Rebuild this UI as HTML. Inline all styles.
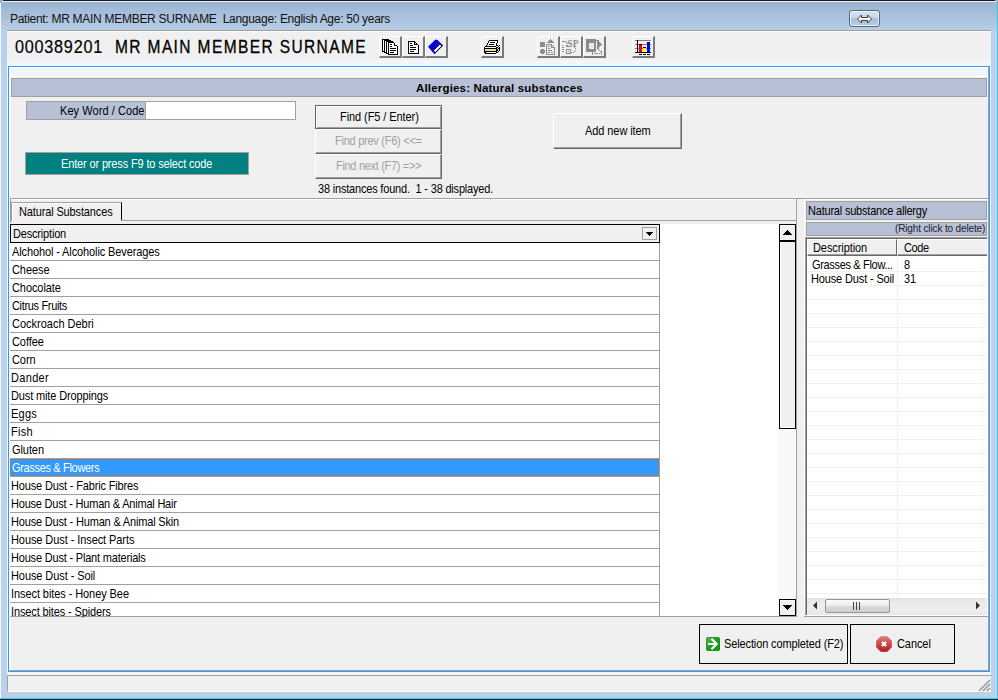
<!DOCTYPE html>
<html><head><meta charset="utf-8">
<style>
*{margin:0;padding:0;box-sizing:border-box}
html,body{width:998px;height:700px;overflow:hidden}
body{position:relative;background:#b9d1ea;font-family:"Liberation Sans",sans-serif;font-size:11px;color:#000}
.a{position:absolute}
.t{position:absolute;white-space:pre;font-size:12px;line-height:14px;transform-origin:0 0}
.btn3d{position:absolute;background:#f0f0f0;border-top:1px solid #fff;border-left:1px solid #fff;border-right:1px solid #696969;border-bottom:1px solid #696969;box-shadow:inset -1px -1px 0 #a0a0a0}
.tb{position:absolute;top:36px;width:23px;height:22px;background:#f0f0f0;border-top:1px solid #fff;border-left:1px solid #fff;border-right:2px solid #7a7a7a;border-bottom:2px solid #7a7a7a}
.tb svg{position:absolute;left:2px;top:2px}
.row{position:absolute;left:10px;width:650px;height:18px;border-bottom:1px solid #a0a0a0;border-right:1px solid #a0a0a0;background:#fff}
.row span{position:absolute;left:2px;top:3px;white-space:pre;line-height:13px;letter-spacing:-0.12px}
.rrow{position:absolute;left:808px;width:178px;height:14px;border-bottom:1px solid #f0f0f0;background:#fff}
</style></head><body>

<!-- title bar -->
<div class="a" style="left:0;top:0;width:998px;height:30px;background:linear-gradient(#97b1cf,#b7cee7)"></div>
<div class="a" style="left:3px;top:0;width:992px;height:1px;background:#1c1c1c"></div>
<div class="a" style="left:2px;top:1px;width:994px;height:1px;background:#e9f0f7"></div>
<div class="a" style="left:0;top:3px;width:1px;height:697px;background:#f4f8fc"></div>
<div class="a" style="left:997px;top:3px;width:1px;height:697px;background:#36cdf0"></div>
<div class="a" style="left:0;top:698px;width:998px;height:1px;background:#36cdf0"></div>
<div class="a" style="left:0;top:699px;width:998px;height:1px;background:#1a2830"></div>

<!-- title button -->
<div class="a" style="left:849px;top:10px;width:31px;height:17px;border:1px solid #56687f;border-radius:3px;background:linear-gradient(#d4e1ef 0,#c6d7ea 50%,#a9c1dc 50%,#b6cbe3 100%);box-shadow:inset 0 0 0 1px rgba(255,255,255,.7)">
<svg class="a" style="left:7px;top:3px" width="15" height="10" viewBox="0 0 15 10"><path d="M0.5 5 L4.5 1 L4.5 3.5 L10.5 3.5 L10.5 1 L14.5 5 L10.5 9 L10.5 6.5 L4.5 6.5 L4.5 9 Z" fill="#f8f8f8" stroke="#3a3a3a" stroke-width="1"/></svg>
</div>

<!-- client -->
<div class="a" style="left:7px;top:30px;width:984px;height:662px;background:#f0f0f0;border-top:1px solid #a09f9c"></div>
<div class="a" style="left:7px;top:31px;width:984px;height:1px;background:#fff"></div>
<div class="a" style="left:7px;top:60px;width:984px;height:615px;background:#f2f6fb"></div>


<!-- toolbar buttons -->
<div class="tb" style="left:379px"></div>
<div class="tb" style="left:402px"></div>
<div class="tb" style="left:425px"></div>
<div class="tb" style="left:481px"></div>
<div class="tb" style="left:537px"></div>
<div class="tb" style="left:560px"></div>
<div class="tb" style="left:583px"></div>
<div class="tb" style="left:632px"></div>


<!-- toolbar icons -->
<svg class="a" style="left:382px;top:39px" width="17" height="16" viewBox="0 0 17 16" shape-rendering="crispEdges">
<path d="M0 0H7V1H9V2H11V3H12V4H13V5H14V6H15V7H16V16H6V15H4V14H2V13H0Z" fill="#000"/>
<rect x="1" y="1" width="1" height="11" fill="#fff"/><rect x="3" y="2" width="1" height="11" fill="#fff"/><rect x="5" y="3" width="1" height="11" fill="#fff"/>
<path d="M7 4H12V7H15V15H7Z" fill="#fff"/><rect x="13" y="5" width="1" height="1" fill="#fff"/>
<rect x="8" y="5" width="2" height="1" fill="#000"/><rect x="8" y="7" width="2" height="1" fill="#000"/><rect x="8" y="9" width="6" height="1" fill="#000"/><rect x="8" y="11" width="6" height="1" fill="#000"/><rect x="8" y="13" width="4" height="1" fill="#000"/>
</svg>
<svg class="a" style="left:408px;top:41px" width="11" height="13" viewBox="0 0 11 13" shape-rendering="crispEdges">
<path d="M0 0H7V1H8V2H9V3H10V4H11V13H0Z" fill="#000"/>
<path d="M1 1H6V4H10V12H1Z" fill="#fff"/><rect x="7" y="2" width="1" height="1" fill="#fff"/>
<rect x="2" y="2" width="2" height="1" fill="#000"/><rect x="2" y="4" width="3" height="1" fill="#000"/><rect x="2" y="6" width="6" height="1" fill="#000"/><rect x="2" y="8" width="6" height="1" fill="#000"/><rect x="2" y="10" width="4" height="1" fill="#000"/>
</svg>
<svg class="a" style="left:426px;top:37px" width="20" height="20" viewBox="0 0 20 20">
<path d="M2 9.8L9.2 2.8H11.2L13.5 5L17.2 8.5L8.5 17.2Z" fill="#0000ff"/>
<path d="M7.2 13.6L13.8 7.1L16 8.9L9.2 15.6Z" fill="#fff" stroke="#000" stroke-width="1"/>
<circle cx="9.6" cy="6.6" r="1.1" fill="#000"/><circle cx="7.5" cy="8.4" r="0.9" fill="#000"/>
</svg>
<svg class="a" style="left:482px;top:37px" width="20" height="20" viewBox="0 0 20 20" shape-rendering="crispEdges">
<rect x="7" y="3" width="9" height="1" fill="#000"/><rect x="6" y="4" width="1" height="1" fill="#000"/><rect x="7" y="4" width="8" height="1" fill="#fff"/><rect x="15" y="4" width="1" height="1" fill="#000"/><rect x="6" y="5" width="1" height="1" fill="#000"/><rect x="7" y="5" width="1" height="1" fill="#fff"/><rect x="8" y="5" width="5" height="1" fill="#000"/><rect x="13" y="5" width="2" height="1" fill="#fff"/><rect x="15" y="5" width="1" height="1" fill="#000"/><rect x="5" y="6" width="1" height="1" fill="#000"/><rect x="6" y="6" width="8" height="1" fill="#fff"/><rect x="14" y="6" width="1" height="1" fill="#000"/><rect x="5" y="7" width="1" height="1" fill="#000"/><rect x="6" y="7" width="1" height="1" fill="#fff"/><rect x="7" y="7" width="5" height="1" fill="#000"/><rect x="12" y="7" width="2" height="1" fill="#fff"/><rect x="14" y="7" width="1" height="1" fill="#000"/><rect x="4" y="8" width="1" height="1" fill="#000"/><rect x="5" y="8" width="9" height="1" fill="#fff"/><rect x="14" y="8" width="1" height="1" fill="#000"/>
<path d="M3 9H14V10H15V16H14V17H3V16H2V10H3Z" fill="#000"/>
<rect x="3" y="10" width="11" height="1" fill="#fff"/>
<rect x="3" y="12" width="11" height="2" fill="#d8d8d8"/><rect x="9" y="12" width="3" height="2" fill="#ffff00"/>
<rect x="4" y="15" width="10" height="1" fill="#fff"/>
<rect x="15" y="8" width="1" height="1" fill="#000"/><rect x="17" y="8" width="1" height="1" fill="#000"/><rect x="16" y="9" width="1" height="1" fill="#000"/><rect x="15" y="10" width="1" height="1" fill="#000"/><rect x="17" y="10" width="1" height="1" fill="#000"/><rect x="16" y="11" width="2" height="1" fill="#000"/><rect x="15" y="12" width="1" height="2" fill="#000"/><rect x="17" y="12" width="1" height="2" fill="#000"/><rect x="16" y="14" width="1" height="1" fill="#000"/><rect x="15" y="15" width="1" height="1" fill="#000"/>
</svg>
<svg class="a" style="left:538px;top:37px" width="20" height="20" viewBox="0 0 20 20" shape-rendering="crispEdges">
<rect x="2" y="5" width="5" height="5" fill="#8c8c8c"/>
<path d="M3 12H6V13H7V16H6V17H3V16H2V13H3Z" fill="#8c8c8c"/>
<path d="M12 2H13V3H14V4H15V5H16V6H9V5H10V4H11V3H12Z" fill="#8c8c8c"/>
<path d="M8 7H14V8H15V9H16V10H17V18H8Z" fill="#8c8c8c"/>
<path d="M9 8H13V11H16V17H9Z" fill="#f0f0f0"/><rect x="14" y="9" width="1" height="1" fill="#f0f0f0"/>
<rect x="10" y="9" width="2" height="1" fill="#8c8c8c"/><rect x="10" y="11" width="2" height="1" fill="#8c8c8c"/><rect x="10" y="13" width="4" height="1" fill="#8c8c8c"/><rect x="10" y="15" width="2" height="1" fill="#8c8c8c"/><rect x="13" y="15" width="2" height="1" fill="#8c8c8c"/>
</svg>
<svg class="a" style="left:561px;top:37px" width="20" height="20" viewBox="0 0 20 20">
<text x="6.3" y="9.8" font-family="Liberation Serif" font-weight="bold" font-size="9.5" fill="#8c8c8c" letter-spacing="0.2">SP</text>
<g shape-rendering="crispEdges" fill="#8c8c8c">
<rect x="1" y="4" width="3" height="1"/><rect x="1" y="8" width="1" height="1"/><rect x="1" y="10" width="2" height="1"/><rect x="1" y="12" width="2" height="1"/><rect x="1" y="14" width="2" height="1"/>
<rect x="4" y="4" width="1" height="1"/><rect x="5" y="5" width="1" height="1"/><rect x="6" y="6" width="1" height="1"/>
<path d="M5 8H7V9H10V10H5Z"/>
<path d="M5 12H10V17H5Z M6 13V16H9V13Z" fill-rule="evenodd"/><rect x="7" y="14" width="1" height="1"/>
<rect x="10" y="15" width="1" height="1"/><rect x="12" y="15" width="1" height="1"/><rect x="13" y="14" width="1" height="1"/><rect x="14" y="13" width="1" height="1"/><rect x="14" y="11" width="1" height="1"/><rect x="13" y="10" width="1" height="1"/>
</g>
</svg>
<svg class="a" style="left:584px;top:37px" width="20" height="20" viewBox="0 0 20 20" shape-rendering="crispEdges">
<path d="M2 2H12V15H2Z M5 6V12H10V6Z" fill="#8c8c8c" fill-rule="evenodd"/>
<rect x="6" y="7" width="3" height="4" fill="#e4e4e4"/>
<rect x="12" y="3" width="3" height="1" fill="#8c8c8c"/><rect x="13" y="4" width="2" height="8" fill="#8c8c8c"/>
<path d="M15 5H16V6H17V7H18V8H17V9H16V10H15Z" fill="#8c8c8c"/>
<rect x="14" y="12" width="1" height="1" fill="#8c8c8c"/><rect x="15" y="13" width="1" height="1" fill="#8c8c8c"/><rect x="16" y="14" width="1" height="1" fill="#8c8c8c"/>
<rect x="8" y="15" width="1" height="3" fill="#8c8c8c"/><rect x="17" y="14" width="1" height="4" fill="#8c8c8c"/>
<rect x="10" y="16" width="4" height="1" fill="#8c8c8c"/><rect x="15" y="16" width="1" height="1" fill="#8c8c8c"/>
</svg>
<svg class="a" style="left:634px;top:39px" width="18" height="17" viewBox="0 0 18 17" shape-rendering="crispEdges">
<rect x="1" y="1" width="16" height="1" fill="#808080"/><rect x="1" y="5" width="16" height="1" fill="#808080"/><rect x="1" y="9" width="16" height="1" fill="#808080"/><rect x="1" y="13" width="16" height="1" fill="#808080"/>
<rect x="3" y="1" width="1" height="13" fill="#000"/><rect x="1" y="13" width="16" height="1" fill="#000"/>
<rect x="5" y="5" width="3" height="8" fill="#ff0000"/><rect x="5" y="5" width="3" height="1" fill="#000"/>
<rect x="9" y="8" width="3" height="5" fill="#ffff00"/><rect x="9" y="8" width="3" height="1" fill="#000"/>
<rect x="13" y="3" width="3" height="10" fill="#0000ff"/><rect x="13" y="3" width="3" height="1" fill="#000"/>
<rect x="5" y="15" width="3" height="1" fill="#000"/><rect x="9" y="15" width="3" height="1" fill="#000"/><rect x="13" y="15" width="3" height="1" fill="#000"/>
</svg>

<!-- main panel -->
<div class="a" style="left:8px;top:66px;width:982px;height:606px;border:1px solid #3399ff"></div>
<div class="a" style="left:9px;top:67px;width:980px;height:604px;border-top:1px solid #fff;border-left:1px solid #fff;border-right:1px solid #a0a0a0;border-bottom:1px solid #a0a0a0"></div>
<div class="a" style="left:10px;top:76px;width:978px;height:594px;background:#f0f0f0;border-top:1px solid #fff;border-left:1px solid #fff"></div>

<!-- header bar -->
<div class="a" style="left:11px;top:78px;width:976px;height:19px;background:#b8c0d5;border:1px solid #a0a0a0"></div>


<!-- keyword -->
<div class="a" style="left:26px;top:101px;width:120px;height:19px;background:#b8c0d5;border:1px solid #a0a0a0"></div>
<div class="a" style="left:145px;top:101px;width:151px;height:19px;background:#fff;border:1px solid #a0a0a0"></div>

<!-- teal bar -->
<div class="a" style="left:25px;top:152px;width:224px;height:23px;background:#008080;border:1px solid #a0a0a0"></div>

<!-- find buttons -->
<div class="a" style="left:315px;top:105px;width:127px;height:24px;background:#f0f0f0;border:1px solid #646464;box-shadow:inset 1px 1px 0 #fff,inset -1px -1px 0 #a0a0a0"></div>
<div class="btn3d" style="left:315px;top:129px;width:127px;height:25px"></div>
<div class="btn3d" style="left:315px;top:154px;width:127px;height:25px"></div>

<!-- add new -->
<div class="btn3d" style="left:553px;top:113px;width:129px;height:36px"></div>

<!-- separator + tab -->
<div class="a" style="left:10px;top:198px;width:978px;height:1px;background:#a0a0a0"></div>
<div class="a" style="left:11px;top:199px;width:977px;height:1px;background:#fff"></div>
<div class="a" style="left:10px;top:198px;width:1px;height:25px;background:#a0a0a0"></div>
<div class="a" style="left:11px;top:202px;width:111px;height:19px;background:#f0f0f0;border-top:1px solid #a0a0a0;border-left:1px solid #a0a0a0;border-right:1px solid #000;box-shadow:inset 1px 1px 0 #fff"></div>
<div class="a" style="left:121px;top:220px;width:676px;height:1px;background:#a0a0a0"></div>
<div class="a" style="left:796px;top:199px;width:1px;height:418px;background:#a0a0a0"></div>
<div class="a" style="left:797px;top:199px;width:7px;height:1px;background:#f0f0f0"></div>
<div class="a" style="left:10px;top:616px;width:787px;height:1px;background:#a0a0a0"></div>

<!-- list -->
<div class="a" style="left:10px;top:224px;width:769px;height:392px;background:#fff"></div>
<div class="a" style="left:10px;top:224px;width:650px;height:19px;background:#f0f0f0;border:1px solid #000"></div>
<div class="a" style="left:642px;top:227px;width:15px;height:13px;border:1px solid #a0a0a0;background:#f0f0f0"></div>
<svg class="a" style="left:646px;top:232px" width="7" height="4" shape-rendering="crispEdges"><path d="M0 0H7V1H6V2H5V3H4V4H3V3H2V2H1V1H0Z" fill="#000"/></svg>
<div class="a" style="left:659px;top:243px;width:1px;height:373px;background:#a0a0a0"></div>
<div class="row" style="top:243px;height:18px"></div>
<div class="row" style="top:261px;height:18px"></div>
<div class="row" style="top:279px;height:18px"></div>
<div class="row" style="top:297px;height:18px"></div>
<div class="row" style="top:315px;height:18px"></div>
<div class="row" style="top:333px;height:18px"></div>
<div class="row" style="top:351px;height:18px"></div>
<div class="row" style="top:369px;height:18px"></div>
<div class="row" style="top:387px;height:18px"></div>
<div class="row" style="top:405px;height:18px"></div>
<div class="row" style="top:423px;height:18px"></div>
<div class="row" style="top:441px;height:18px"></div>
<div class="row" style="top:459px;height:18px;background:#3399ff"><div class="a" style="left:0;top:0;width:649px;height:17px;border:1px dotted #cc6600"></div></div>
<div class="row" style="top:477px;height:18px"></div>
<div class="row" style="top:495px;height:18px"></div>
<div class="row" style="top:513px;height:18px"></div>
<div class="row" style="top:531px;height:18px"></div>
<div class="row" style="top:549px;height:18px"></div>
<div class="row" style="top:567px;height:18px"></div>
<div class="row" style="top:585px;height:18px"></div>
<div class="row" style="top:603px;height:13px;border-bottom:0"></div>

<!-- vscroll -->
<div class="a" style="left:779px;top:224px;width:17px;height:392px;background-color:#fafafa;background-image:repeating-conic-gradient(#fff 0 25%,#f3f3f3 0 50%);background-size:2px 2px"></div>
<div class="a" style="left:779px;top:224px;width:17px;height:18px;background:#f0f0f0;border:1px solid #000;border-bottom-width:2px;box-shadow:inset 1px 1px 0 #fff"></div>
<svg class="a" style="left:783px;top:230px" width="9" height="5" shape-rendering="crispEdges"><path d="M4 0H5V1H6V2H7V3H8V4H9V5H0V4H1V3H2V2H3V1H4Z" fill="#000"/></svg>
<div class="a" style="left:779px;top:242px;width:17px;height:187px;background:#f0f0f0;border:1px solid #000;border-top:0;box-shadow:inset 1px 0 0 #fff,inset 0 -1px 0 #fff"></div>
<div class="a" style="left:779px;top:599px;width:17px;height:17px;background:#f0f0f0;border:1px solid #000;box-shadow:inset 1px 1px 0 #fff"></div>
<svg class="a" style="left:783px;top:605px" width="9" height="5" shape-rendering="crispEdges"><path d="M0 0H9V1H8V2H7V3H6V4H5V5H4V4H3V3H2V2H1V1H0Z" fill="#000"/></svg>


<!-- right panel -->
<div class="a" style="left:804px;top:199px;width:1px;height:417px;background:#fff"></div>
<div class="a" style="left:804px;top:616px;width:185px;height:1px;background:#a0a0a0"></div>
<div class="a" style="left:806px;top:201px;width:181px;height:19px;background:#b8c0d5;border:1px solid #a0a0a0"></div>
<div class="a" style="left:806px;top:222px;width:181px;height:14px;background:#b8c0d5;border:1px solid #a0a0a0"></div>
<div class="a" style="left:805px;top:237px;width:183px;height:379px;background:#fff;border-top:1px solid #a0a0a0;border-left:1px solid #a0a0a0;border-right:1px solid #fff;border-bottom:1px solid #fff;box-shadow:inset 1px 1px 0 #696969"></div>
<div class="a" style="left:807px;top:239px;width:90px;height:17px;background:#f0f0f0;border-top:1px solid #fff;border-left:1px solid #fff;border-right:1px solid #696969;border-bottom:1px solid #696969;box-shadow:inset 0 -1px 0 #a0a0a0"></div>
<div class="a" style="left:897px;top:239px;width:90px;height:17px;background:#f0f0f0;border-top:1px solid #fff;border-left:1px solid #fff;border-bottom:1px solid #696969;box-shadow:inset 0 -1px 0 #a0a0a0"></div>
<div class="a" style="left:807px;top:271px;width:180px;height:1px;background:#f0f0f0"></div>
<div class="a" style="left:807px;top:285px;width:180px;height:1px;background:#f0f0f0"></div>
<div class="a" style="left:807px;top:299px;width:180px;height:1px;background:#f0f0f0"></div>
<div class="a" style="left:807px;top:313px;width:180px;height:1px;background:#f0f0f0"></div>
<div class="a" style="left:807px;top:327px;width:180px;height:1px;background:#f0f0f0"></div>
<div class="a" style="left:807px;top:341px;width:180px;height:1px;background:#f0f0f0"></div>
<div class="a" style="left:807px;top:355px;width:180px;height:1px;background:#f0f0f0"></div>
<div class="a" style="left:807px;top:369px;width:180px;height:1px;background:#f0f0f0"></div>
<div class="a" style="left:807px;top:383px;width:180px;height:1px;background:#f0f0f0"></div>
<div class="a" style="left:807px;top:397px;width:180px;height:1px;background:#f0f0f0"></div>
<div class="a" style="left:807px;top:411px;width:180px;height:1px;background:#f0f0f0"></div>
<div class="a" style="left:807px;top:425px;width:180px;height:1px;background:#f0f0f0"></div>
<div class="a" style="left:807px;top:439px;width:180px;height:1px;background:#f0f0f0"></div>
<div class="a" style="left:807px;top:453px;width:180px;height:1px;background:#f0f0f0"></div>
<div class="a" style="left:807px;top:467px;width:180px;height:1px;background:#f0f0f0"></div>
<div class="a" style="left:807px;top:481px;width:180px;height:1px;background:#f0f0f0"></div>
<div class="a" style="left:807px;top:495px;width:180px;height:1px;background:#f0f0f0"></div>
<div class="a" style="left:807px;top:509px;width:180px;height:1px;background:#f0f0f0"></div>
<div class="a" style="left:807px;top:523px;width:180px;height:1px;background:#f0f0f0"></div>
<div class="a" style="left:807px;top:537px;width:180px;height:1px;background:#f0f0f0"></div>
<div class="a" style="left:807px;top:551px;width:180px;height:1px;background:#f0f0f0"></div>
<div class="a" style="left:807px;top:565px;width:180px;height:1px;background:#f0f0f0"></div>
<div class="a" style="left:807px;top:579px;width:180px;height:1px;background:#f0f0f0"></div>
<div class="a" style="left:807px;top:593px;width:180px;height:1px;background:#f0f0f0"></div>
<div class="a" style="left:897px;top:256px;width:1px;height:342px;background:#f0f0f0"></div>
<!-- hscroll -->
<div class="a" style="left:807px;top:598px;width:180px;height:17px;background:linear-gradient(#e3e3e3,#ececec 30%,#ececec 70%,#e8e8e8)"></div>
<svg class="a" style="left:812px;top:601px" width="6" height="9"><path d="M5 0.5V8.5L1 4.5Z" fill="#333"/></svg>
<svg class="a" style="left:975px;top:601px" width="6" height="9"><path d="M1 0.5V8.5L5 4.5Z" fill="#333"/></svg>
<div class="a" style="left:825px;top:599px;width:65px;height:14px;border:1px solid #969696;border-radius:2px;background:linear-gradient(#fbfbfb,#eaeaea 50%,#dcdcdc 51%,#cfcfcf)"></div>
<svg class="a" style="left:853px;top:602px" width="8" height="8"><path d="M0.5 0V8M3.5 0V8M6.5 0V8" stroke="#444" stroke-width="1"/></svg>

<!-- bottom buttons -->
<div class="a" style="left:699px;top:624px;width:149px;height:40px;background:#f0f0f0;border:1px solid #000"></div>
<svg class="a" style="left:706px;top:637px" width="14" height="14" viewBox="0 0 14 14"><defs><linearGradient id="gg" x1="0" y1="0" x2="1" y2="1"><stop offset="0" stop-color="#62b862"/><stop offset="0.5" stop-color="#259a25"/><stop offset="1" stop-color="#0c9a0c"/></linearGradient></defs><rect x="0" y="0" width="14" height="14" rx="2" fill="url(#gg)"/><rect x="0.5" y="0.5" width="13" height="13" rx="1.8" fill="none" stroke="#1b8a1b" stroke-opacity="0.6"/><path d="M2 7H10.5" stroke="#fff" stroke-width="2"/><path d="M6.2 2.6L10.6 7L6.2 11.4" fill="none" stroke="#fff" stroke-width="2.2" stroke-linecap="square"/></svg>
<div class="a" style="left:850px;top:624px;width:105px;height:40px;background:#f0f0f0;border:1px solid #000"></div>
<svg class="a" style="left:876px;top:636px" width="16" height="16" viewBox="0 0 16 16"><defs><linearGradient id="rg" x1="0" y1="0" x2="0" y2="1"><stop offset="0" stop-color="#de8080"/><stop offset="0.5" stop-color="#c94848"/><stop offset="1" stop-color="#b41c1c"/></linearGradient></defs><path d="M5 0.3H11L15.7 5V11L11 15.7H5L0.3 11V5Z" fill="url(#rg)" stroke="url(#rg)" stroke-width="0.6" stroke-linejoin="round"/><path d="M6 6L10 10M10 6L6 10" stroke="#fff" stroke-width="2.3"/></svg>

<!-- status bar -->
<div class="a" style="left:7px;top:675px;width:984px;height:17px;background:#f0f0f0;border-top:1px solid #a0a0a0;border-left:1px solid #a0a0a0;border-bottom:1px solid #fff"></div>
<svg class="a" style="left:978px;top:679px" width="13" height="13"><path d="M12 1L1 12M12 5L5 12M12 9L9 12" stroke="#9a9a9a" stroke-width="1.6"/></svg>

<div class="t" id="title" style="left:10px;top:12px;font-size:12px;letter-spacing:-0.284px;color:#111">Patient: MR MAIN MEMBER SURNAME  Language: English Age: 50 years</div>
<div class="t" id="num" style="left:15px;top:40px;font-size:18px;letter-spacing:0.85px;transform:scaleX(0.9);-webkit-text-stroke:0.2px #000">000389201</div>
<div class="t" id="name" style="left:115px;top:40px;font-size:18px;letter-spacing:1.634px;transform:scaleX(0.86);-webkit-text-stroke:0.3px #000">MR MAIN MEMBER SURNAME</div>
<div class="t" id="allerg" style="left:416px;top:81px;font-size:11.5px;letter-spacing:0.176px;font-weight:bold">Allergies: Natural substances</div>
<div class="t" id="kw" style="left:60px;top:103px;font-size:11px;letter-spacing:0.063px;transform:scale(1,1.12)">Key Word / Code</div>
<div class="t" id="teal" style="left:61px;top:156px;font-size:11px;letter-spacing:-0.145px;transform:scale(1,1.12);color:#fff">Enter or press F9 to select code</div>
<div class="t" id="find" style="left:340px;top:109px;font-size:11px;letter-spacing:-0.08px;transform:scale(1,1.12)">Find (F5 / Enter)</div>
<div class="t" id="prev" style="left:335px;top:133px;font-size:11px;letter-spacing:-0.256px;transform:scale(1,1.12);color:#a0a0a0">Find prev (F6) &lt;&lt;=</div>
<div class="t" id="next" style="left:336px;top:158px;font-size:11px;letter-spacing:-0.315px;transform:scale(1,1.12);color:#a0a0a0">Find next (F7) =&gt;&gt;</div>
<div class="t" id="inst" style="left:318px;top:181px;font-size:11px;letter-spacing:-0.188px;transform:scale(1,1.12)">38 instances found.  1 - 38 displayed.</div>
<div class="t" id="add" style="left:585px;top:123px;font-size:11px;letter-spacing:-0.08px;transform:scale(1,1.12)">Add new item</div>
<div class="t" id="tab" style="left:19px;top:204px;font-size:11px;letter-spacing:-0.139px;transform:scale(1,1.12)">Natural Substances</div>
<div class="t" id="desc" style="left:13px;top:226px;font-size:11px;letter-spacing:-0.18px;transform:scale(1,1.12)">Description</div>
<div class="t" id="nsa" style="left:808px;top:203px;font-size:11px;letter-spacing:-0.205px;transform:scale(1,1.12)">Natural substance allergy</div>
<div class="t" id="rcd" style="left:895px;top:222px;font-size:10px;letter-spacing:-0.136px;color:#1a1a2a">(Right click to delete)</div>
<div class="t" id="rdesc" style="left:813px;top:240px;font-size:11px;letter-spacing:-0.08px;transform:scale(1,1.12)">Description</div>
<div class="t" id="rcode" style="left:904px;top:240px;font-size:11px;letter-spacing:-0.413px;transform:scale(1,1.12)">Code</div>
<div class="t" id="r1" style="left:812px;top:257px;font-size:11px;letter-spacing:-0.33px;transform:scale(1,1.12)">Grasses &amp; Flow...</div>
<div class="t" id="r1c" style="left:904px;top:257px;font-size:11px;letter-spacing:-0.08px;transform:scale(1,1.12)">8</div>
<div class="t" id="r2" style="left:811px;top:271px;font-size:11px;letter-spacing:-0.143px;transform:scale(1,1.12)">House Dust - Soil</div>
<div class="t" id="r2c" style="left:904px;top:271px;font-size:11px;letter-spacing:-0.08px;transform:scale(1,1.12)">31</div>
<div class="t" id="sel" style="left:724px;top:636px;font-size:11px;letter-spacing:-0.123px;transform:scale(1,1.12)">Selection completed (F2)</div>
<div class="t" id="cancel" style="left:897px;top:636px;font-size:11px;letter-spacing:-0.08px;transform:scale(1,1.12)">Cancel</div>
<div class="t" id="row0" style="left:12px;top:244px;font-size:11px;letter-spacing:-0.114px;transform:scale(1,1.12)">Alchohol - Alcoholic Beverages</div>
<div class="t" id="row1" style="left:12px;top:262px;font-size:11px;letter-spacing:-0.08px;transform:scale(1,1.12)">Cheese</div>
<div class="t" id="row2" style="left:12px;top:280px;font-size:11px;letter-spacing:-0.08px;transform:scale(1,1.12)">Chocolate</div>
<div class="t" id="row3" style="left:12px;top:298px;font-size:11px;letter-spacing:-0.33px;transform:scale(1,1.12)">Citrus Fruits</div>
<div class="t" id="row4" style="left:12px;top:316px;font-size:11px;letter-spacing:-0.009px;transform:scale(1,1.12)">Cockroach Debri</div>
<div class="t" id="row5" style="left:12px;top:334px;font-size:11px;letter-spacing:-0.08px;transform:scale(1,1.12)">Coffee</div>
<div class="t" id="row6" style="left:12px;top:352px;font-size:11px;letter-spacing:-0.08px;transform:scale(1,1.12)">Corn</div>
<div class="t" id="row7" style="left:11px;top:370px;font-size:11px;letter-spacing:0.32px;transform:scale(1,1.12)">Dander</div>
<div class="t" id="row8" style="left:11px;top:388px;font-size:11px;letter-spacing:-0.136px;transform:scale(1,1.12)">Dust mite Droppings</div>
<div class="t" id="row9" style="left:11px;top:406px;font-size:11px;letter-spacing:0.253px;transform:scale(1,1.12)">Eggs</div>
<div class="t" id="row10" style="left:11px;top:424px;font-size:11px;letter-spacing:0.253px;transform:scale(1,1.12)">Fish</div>
<div class="t" id="row11" style="left:12px;top:442px;font-size:11px;letter-spacing:-0.08px;transform:scale(1,1.12)">Gluten</div>
<div class="t" id="row12" style="left:12px;top:460px;font-size:11px;letter-spacing:-0.33px;transform:scale(1,1.12);color:#fff">Grasses &amp; Flowers</div>
<div class="t" id="row13" style="left:11px;top:478px;font-size:11px;letter-spacing:-0.16px;transform:scale(1,1.12)">House Dust - Fabric Fibres</div>
<div class="t" id="row14" style="left:11px;top:496px;font-size:11px;letter-spacing:-0.209px;transform:scale(1,1.12)">House Dust - Human &amp; Animal Hair</div>
<div class="t" id="row15" style="left:11px;top:514px;font-size:11px;letter-spacing:-0.177px;transform:scale(1,1.12)">House Dust - Human &amp; Animal Skin</div>
<div class="t" id="row16" style="left:11px;top:532px;font-size:11px;letter-spacing:-0.08px;transform:scale(1,1.12)">House Dust - Insect Parts</div>
<div class="t" id="row17" style="left:11px;top:550px;font-size:11px;letter-spacing:-0.191px;transform:scale(1,1.12)">House Dust - Plant materials</div>
<div class="t" id="row18" style="left:11px;top:568px;font-size:11px;letter-spacing:-0.08px;transform:scale(1,1.12)">House Dust - Soil</div>
<div class="t" id="row19" style="left:11px;top:586px;font-size:11px;letter-spacing:-0.08px;transform:scale(1,1.12)">Insect bites - Honey Bee</div>
<div class="t" id="row20" style="left:11px;top:604px;font-size:11px;letter-spacing:-0.128px;transform:scale(1,1.12);clip-path:inset(0 0 2px 0)">Insect bites - Spiders</div>
</body></html>
